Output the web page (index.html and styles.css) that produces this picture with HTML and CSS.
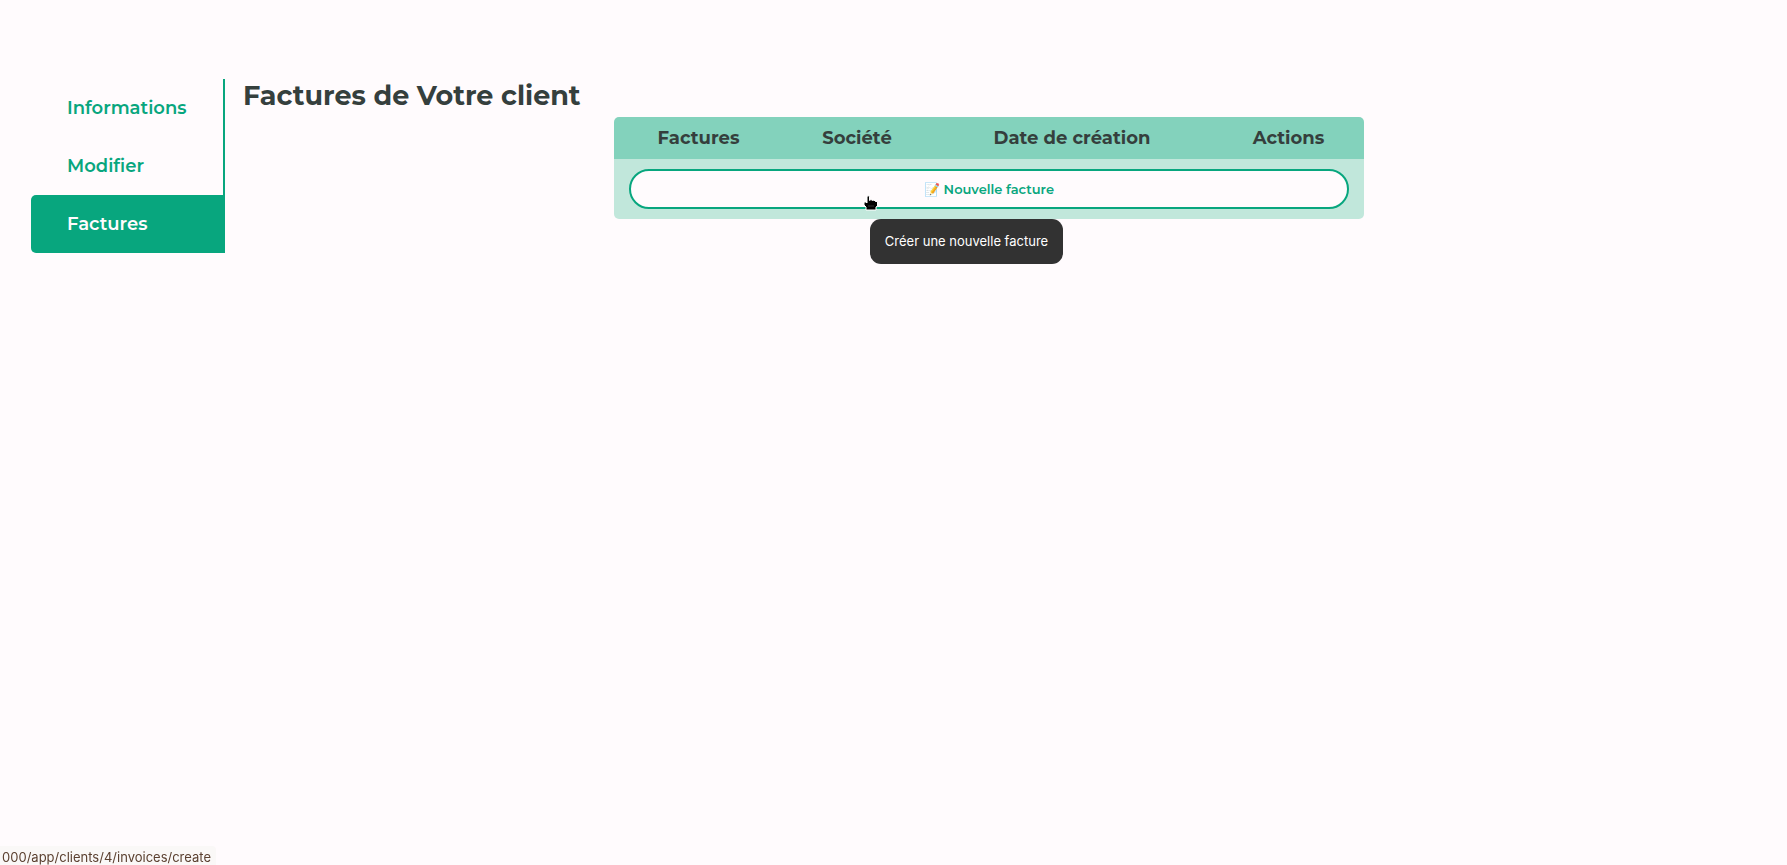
FILE: index.html
```html
<!DOCTYPE html>
<html lang="fr">
<head>
<meta charset="utf-8">
<meta name="viewport" content="width=device-width, initial-scale=1">
<title>Factures de Votre client</title>
<link rel="stylesheet" href="styles.css">
</head>
<body>
<div class="layout">
  <nav class="sidebar">
    <a class="sidebar-link" href="#informations">Informations</a>
    <a class="sidebar-link" href="#modifier">Modifier</a>
    <a class="sidebar-link active" href="#factures" aria-current="page">Factures</a>
  </nav>
  <main class="content">
    <h1 class="title">Factures de Votre client</h1>
    <table class="invoices">
      <colgroup><col class="col-invoice"><col class="col-company"><col class="col-date"><col class="col-actions"></colgroup>
      <thead>
        <tr><th scope="col">Factures</th><th scope="col">Société</th><th scope="col">Date de création</th><th scope="col">Actions</th></tr>
      </thead>
      <tbody>
        <tr>
          <td colspan="4">
            <div class="create">
              <a class="create-link" href="#create" aria-describedby="create-tip"><span class="emoji">📝</span> Nouvelle facture</a>
              <svg class="pointer" viewBox="0 0 16 16" aria-hidden="true">
                <path d="M4 1.5Q5 0 6.500 1.500V5.500L8 4.500L9.500 5.500L11 5L12.500 6.500L14.500 6.500V11L13 12V15H3V12L1 10V7H3L4 8Z" fill="#000" stroke="#fff" stroke-width="1"/>
                <path d="M6 10v2M8 10v2M10 10v2" stroke="#555" stroke-width="0.600"/>
              </svg>
              <span class="tooltip" role="tooltip" id="create-tip">Créer une nouvelle facture</span>
            </div>
          </td>
        </tr>
      </tbody>
    </table>
  </main>
</div>
<div class="status">000/app/clients/4/invoices/create</div>
</body>
</html>
```
FILE: styles.css
```css
* { box-sizing: border-box; }
body {
  min-height: 100vh;
  margin: 0;
  background: #fffbfd;
  color: #353f3d;
  font-family: Montserrat, Inter, sans-serif;
}
.layout {
  display: flex;
  align-items: flex-start;
  min-height: 100vh;
  padding: 79px 31px 0;
}
.sidebar {
  display: flex;
  flex-direction: column;
  flex: 0 0 194px;
}
.sidebar-link {
  padding: 0 34px 0 36px;
  border-right: 2px solid #08a67e;
  color: #08a67e;
  font-size: 18px;
  font-weight: 600;
  line-height: 58px;
  text-decoration: none;
}
.sidebar-link.active {
  border-radius: 5px 0 0 5px;
  background: #08a67e;
  color: #fffbfd;
}
.content {
  flex: 1;
  padding: 0 21px 0 18px;
}
.title {
  margin: 0;
  font-size: 27px;
  font-weight: 700;
  line-height: 34px;
}
.invoices {
  width: 750px;
  max-width: 100%;
  margin: 4px auto 0;
  border-spacing: 0;
  table-layout: fixed;
}
.col-invoice { width: 169px; }
.col-company { width: 148px; }
.col-date { width: 282px; }
.invoices th {
  padding: 0;
  background: #83d2bc;
  font-size: 18px;
  font-weight: 700;
  line-height: 42px;
}
.invoices th:first-child { border-top-left-radius: 5px; }
.invoices th:last-child { border-top-right-radius: 5px; }
.invoices td {
  padding: 10px 15px;
  border-radius: 0 0 5px 5px;
  background: #c1e7db;
}
.create { position: relative; }
.create-link {
  display: block;
  border: 2px solid #08a67e;
  border-radius: 20px;
  background: #fffbfd;
  color: #08a67e;
  font-size: 13px;
  font-weight: 600;
  line-height: 36px;
  text-align: center;
  text-decoration: none;
}
.emoji { font-size: 13px; }
.pointer {
  position: absolute;
  top: 26px;
  left: 234px;
  width: 16px;
  height: 16px;
}
.tooltip {
  position: absolute;
  top: 50px;
  left: 241px;
  min-width: 193px;
  padding: 0 13px;
  border-radius: 11px;
  background: #323232;
  color: #fff;
  font: 13px/45px Inter, sans-serif;
  text-align: center;
  white-space: nowrap;
}
.status {
  position: fixed;
  bottom: 0;
  left: 0;
  display: flex;
  justify-content: flex-end;
  width: 216px;
  height: 19px;
  padding-right: 5px;
  overflow: hidden;
  border-top-right-radius: 4px;
  background: #faf8f7;
  color: #5b4030;
  font: 13px/22px Inter, sans-serif;
  white-space: nowrap;
}
```
